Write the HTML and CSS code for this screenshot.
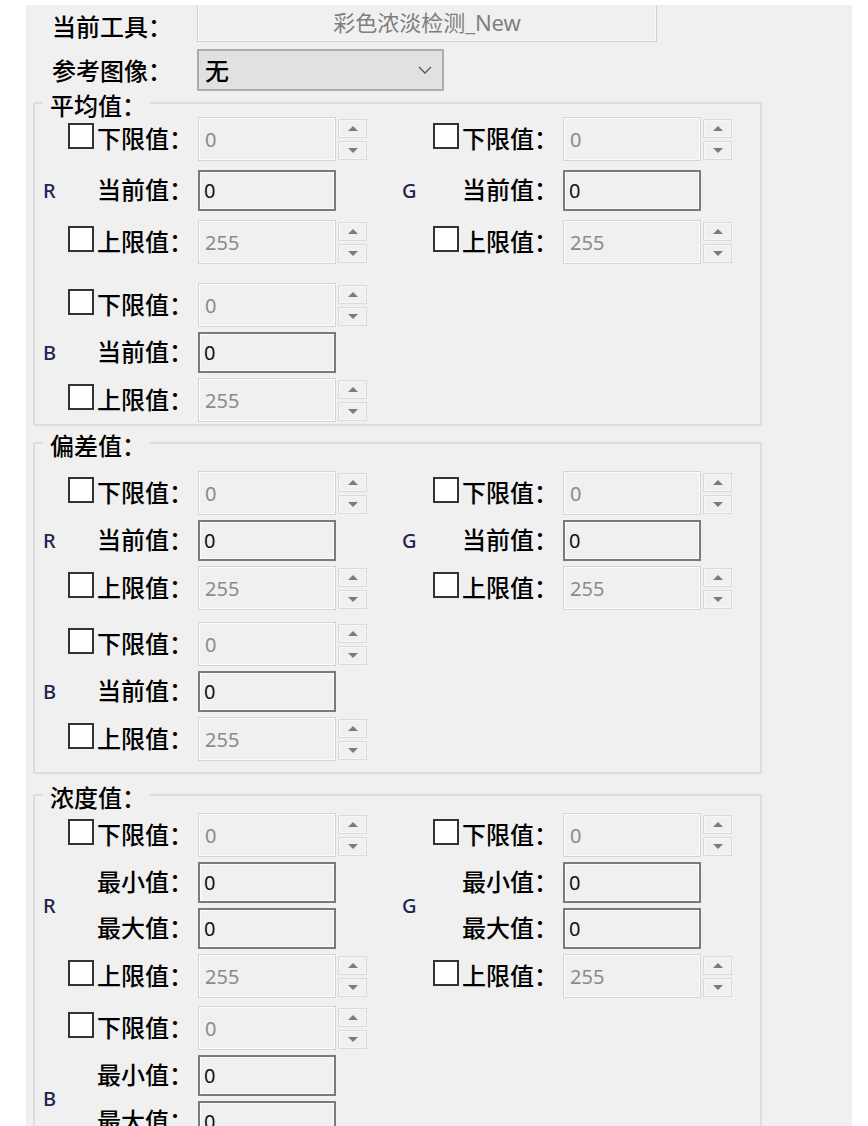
FILE: index.html
```html
<!DOCTYPE html>
<html lang="zh-CN">
<head>
<meta charset="utf-8">
<title>彩色浓淡检测</title>
<link rel="stylesheet" href="styles.css">
</head>
<body>
<div class="panel">
  <div class="top-row top-row--tool">
    <span class="top-label">当前工具：</span>
    <div class="tool-field">彩色浓淡检测_New</div>
  </div>
  <div class="top-row top-row--combo">
    <span class="top-label">参考图像：</span>
    <div class="combo"><span class="combo-text">无</span><svg class="chev" width="14" height="8" viewBox="0 0 14 8"><polyline points="1,1 7,7 13,1" fill="none" stroke="#555" stroke-width="1.3"/></svg></div>
  </div>

  <section class="group group--avg">
    <div class="group-title">平均值：</div>
    <div class="channels">
      <div class="channel channel--loose">
        <span class="ch">R</span>
        <div class="rows">
          <div class="row"><div class="lab"><span class="cb"></span><span class="txt">下限值：</span></div><div class="num">0</div><div class="spin"><span class="sb sb--up"></span><span class="sb sb--down"></span></div></div>
          <div class="row row--text"><div class="lab"><span class="txt">当前值：</span></div><div class="tb">0</div></div>
          <div class="row"><div class="lab"><span class="cb"></span><span class="txt">上限值：</span></div><div class="num">255</div><div class="spin"><span class="sb sb--up"></span><span class="sb sb--down"></span></div></div>
        </div>
      </div>
      <div class="channel channel--loose channel--right">
        <span class="ch">G</span>
        <div class="rows">
          <div class="row"><div class="lab"><span class="cb"></span><span class="txt">下限值：</span></div><div class="num">0</div><div class="spin"><span class="sb sb--up"></span><span class="sb sb--down"></span></div></div>
          <div class="row row--text"><div class="lab"><span class="txt">当前值：</span></div><div class="tb">0</div></div>
          <div class="row"><div class="lab"><span class="cb"></span><span class="txt">上限值：</span></div><div class="num">255</div><div class="spin"><span class="sb sb--up"></span><span class="sb sb--down"></span></div></div>
        </div>
      </div>
      <div class="channel">
        <span class="ch">B</span>
        <div class="rows">
          <div class="row"><div class="lab"><span class="cb"></span><span class="txt">下限值：</span></div><div class="num">0</div><div class="spin"><span class="sb sb--up"></span><span class="sb sb--down"></span></div></div>
          <div class="row row--text"><div class="lab"><span class="txt">当前值：</span></div><div class="tb">0</div></div>
          <div class="row"><div class="lab"><span class="cb"></span><span class="txt">上限值：</span></div><div class="num">255</div><div class="spin"><span class="sb sb--up"></span><span class="sb sb--down"></span></div></div>
        </div>
      </div>
    </div>
  </section>

  <section class="group group--dev">
    <div class="group-title">偏差值：</div>
    <div class="channels">
      <div class="channel">
        <span class="ch">R</span>
        <div class="rows">
          <div class="row"><div class="lab"><span class="cb"></span><span class="txt">下限值：</span></div><div class="num">0</div><div class="spin"><span class="sb sb--up"></span><span class="sb sb--down"></span></div></div>
          <div class="row row--text"><div class="lab"><span class="txt">当前值：</span></div><div class="tb">0</div></div>
          <div class="row"><div class="lab"><span class="cb"></span><span class="txt">上限值：</span></div><div class="num">255</div><div class="spin"><span class="sb sb--up"></span><span class="sb sb--down"></span></div></div>
        </div>
      </div>
      <div class="channel channel--right">
        <span class="ch">G</span>
        <div class="rows">
          <div class="row"><div class="lab"><span class="cb"></span><span class="txt">下限值：</span></div><div class="num">0</div><div class="spin"><span class="sb sb--up"></span><span class="sb sb--down"></span></div></div>
          <div class="row row--text"><div class="lab"><span class="txt">当前值：</span></div><div class="tb">0</div></div>
          <div class="row"><div class="lab"><span class="cb"></span><span class="txt">上限值：</span></div><div class="num">255</div><div class="spin"><span class="sb sb--up"></span><span class="sb sb--down"></span></div></div>
        </div>
      </div>
      <div class="channel">
        <span class="ch">B</span>
        <div class="rows">
          <div class="row"><div class="lab"><span class="cb"></span><span class="txt">下限值：</span></div><div class="num">0</div><div class="spin"><span class="sb sb--up"></span><span class="sb sb--down"></span></div></div>
          <div class="row row--text"><div class="lab"><span class="txt">当前值：</span></div><div class="tb">0</div></div>
          <div class="row"><div class="lab"><span class="cb"></span><span class="txt">上限值：</span></div><div class="num">255</div><div class="spin"><span class="sb sb--up"></span><span class="sb sb--down"></span></div></div>
        </div>
      </div>
    </div>
  </section>

  <section class="group group--den">
    <div class="group-title">浓度值：</div>
    <div class="channels">
      <div class="channel">
        <span class="ch">R</span>
        <div class="rows">
          <div class="row"><div class="lab"><span class="cb"></span><span class="txt">下限值：</span></div><div class="num">0</div><div class="spin"><span class="sb sb--up"></span><span class="sb sb--down"></span></div></div>
          <div class="row row--text"><div class="lab"><span class="txt">最小值：</span></div><div class="tb">0</div></div>
          <div class="row row--text"><div class="lab"><span class="txt">最大值：</span></div><div class="tb">0</div></div>
          <div class="row"><div class="lab"><span class="cb"></span><span class="txt">上限值：</span></div><div class="num">255</div><div class="spin"><span class="sb sb--up"></span><span class="sb sb--down"></span></div></div>
        </div>
      </div>
      <div class="channel channel--right">
        <span class="ch">G</span>
        <div class="rows">
          <div class="row"><div class="lab"><span class="cb"></span><span class="txt">下限值：</span></div><div class="num">0</div><div class="spin"><span class="sb sb--up"></span><span class="sb sb--down"></span></div></div>
          <div class="row row--text"><div class="lab"><span class="txt">最小值：</span></div><div class="tb">0</div></div>
          <div class="row row--text"><div class="lab"><span class="txt">最大值：</span></div><div class="tb">0</div></div>
          <div class="row"><div class="lab"><span class="cb"></span><span class="txt">上限值：</span></div><div class="num">255</div><div class="spin"><span class="sb sb--up"></span><span class="sb sb--down"></span></div></div>
        </div>
      </div>
      <div class="channel">
        <span class="ch">B</span>
        <div class="rows">
          <div class="row"><div class="lab"><span class="cb"></span><span class="txt">下限值：</span></div><div class="num">0</div><div class="spin"><span class="sb sb--up"></span><span class="sb sb--down"></span></div></div>
          <div class="row row--text"><div class="lab"><span class="txt">最小值：</span></div><div class="tb">0</div></div>
          <div class="row row--text"><div class="lab"><span class="txt">最大值：</span></div><div class="tb">0</div></div>
          <div class="row"><div class="lab"><span class="cb"></span><span class="txt">上限值：</span></div><div class="num">255</div><div class="spin"><span class="sb sb--up"></span><span class="sb sb--down"></span></div></div>
        </div>
      </div>
    </div>
  </section>
</div>
</body>
</html>
```

FILE: styles.css
```css
* { box-sizing: border-box; }

body {
  margin: 0;
  background: #ffffff;
  font-family: "Noto Sans", "Noto Sans CJK SC", sans-serif;
  color: #111111;
}

.panel {
  margin: 5px 0 0 26px;
  width: 826px;
  height: 1121px;
  background: #f0f0f0;
  overflow: hidden;
}

.top-row {
  display: flex;
  align-items: center;
}

.top-row--tool {
  height: 37px;
  align-items: flex-start;
}

.top-row--combo {
  margin-top: 7px;
  height: 42px;
}

.top-label {
  flex: 0 0 171px;
  padding-left: 26px;
  font-family: "Noto Sans CJK SC", sans-serif;
  font-weight: 500;
  font-size: 24px;
  line-height: 26px;
  white-space: nowrap;
  color: #000;
}

.top-row--tool .top-label { margin-top: 8px; }

.tool-field {
  width: 460px;
  height: 37px;
  border: 1px solid #d0d0d0;
  border-top: none;
  box-shadow: inset 1px 0 #fbfbfb, inset -1px 0 #fbfbfb, inset 0 -1px #fbfbfb;
  display: flex;
  align-items: center;
  justify-content: center;
  padding-bottom: 4px;
  font-size: 22px;
  color: #7f7f7f;
}

.combo {
  width: 247px;
  height: 42px;
  border: 2px solid #adadad;
  background: #e1e1e1;
  display: flex;
  align-items: center;
  justify-content: space-between;
  padding: 0 10px 0 6px;
}

.combo-text {
  font-family: "Noto Sans CJK SC", sans-serif;
  font-weight: 500;
  font-size: 24px;
  line-height: 26px;
  color: #000;
}

.chev { display: block; }

.group {
  margin-left: 7px;
  width: 729px;
  border: 2px solid #dddddd;
}

.group--avg { margin-top: 11px; }
.group--dev { margin-top: 16px; }
.group--den { margin-top: 20px; }

.group-title {
  width: fit-content;
  margin: -12px 0 -14px 8px;
  padding: 0 4px 0 7px;
  background: #f0f0f0;
  font-family: "Noto Sans CJK SC", sans-serif;
  font-weight: 500;
  font-size: 24px;
  line-height: 26px;
  white-space: nowrap;
  color: #000;
}

.channels {
  display: grid;
  grid-template-columns: 332px 332px;
  column-gap: 33px;
  align-items: start;
}

.group--avg .channels { margin-top: 13px; row-gap: 19px; padding-bottom: 2px; }
.group--dev .channels { margin-top: 27px; row-gap: 12px; padding-bottom: 11px; }
.group--den .channels { margin-top: 17px; row-gap: 8px; }

.channel {
  display: flex;
}

.ch {
  flex: 0 0 33px;
  padding-left: 8px;
  align-self: center;
  font-size: 20px;
  line-height: 20px;
  font-weight: 500;
  color: #1e2450;
}

.channel--right .ch { padding-left: 2px; }

.rows {
  display: flex;
  flex-direction: column;
  gap: 5px;
}

.channel--loose .rows { gap: 9px; }

.row {
  display: flex;
  align-items: center;
  height: 44px;
}

.row--text { height: 41px; }

.lab {
  flex: 0 0 125px;
  margin-right: 5px;
  display: flex;
  align-items: center;
}

.cb {
  width: 26px;
  height: 26px;
  border: 2px solid #333333;
  background: #ffffff;
  margin-bottom: 6px;
}

.txt {
  margin-left: auto;
  margin-bottom: 3px;
  font-family: "Noto Sans CJK SC", sans-serif;
  font-weight: 500;
  font-size: 24px;
  line-height: 26px;
  white-space: nowrap;
  color: #000;
}

.num {
  width: 138px;
  height: 44px;
  border: 1px solid #d4d4d4;
  box-shadow: inset 0 0 0 1px #fbfbfb;
  padding-left: 6px;
  display: flex;
  align-items: center;
  font-size: 20px;
  color: #8f8a86;
}

.tb {
  width: 138px;
  height: 41px;
  border: 2px solid #7a7a7a;
  box-shadow: inset 0 0 0 1px #fbfbfb;
  padding-left: 4px;
  display: flex;
  align-items: center;
  font-size: 20px;
  color: #10101a;
}

.spin {
  align-self: flex-start;
  margin: 2px 0 0 2px;
  display: flex;
  flex-direction: column;
  gap: 3px;
}

.sb {
  width: 29px;
  height: 19px;
  border: 1px solid #dadada;
  box-shadow: inset 0 0 0 1px #f6f6f6;
  display: flex;
  align-items: center;
  justify-content: center;
}

.sb::after {
  content: "";
  border-left: 5px solid transparent;
  border-right: 5px solid transparent;
}

.sb--up::after { border-bottom: 5px solid #7b7b7b; }
.sb--down::after { border-top: 5px solid #7b7b7b; }
```
